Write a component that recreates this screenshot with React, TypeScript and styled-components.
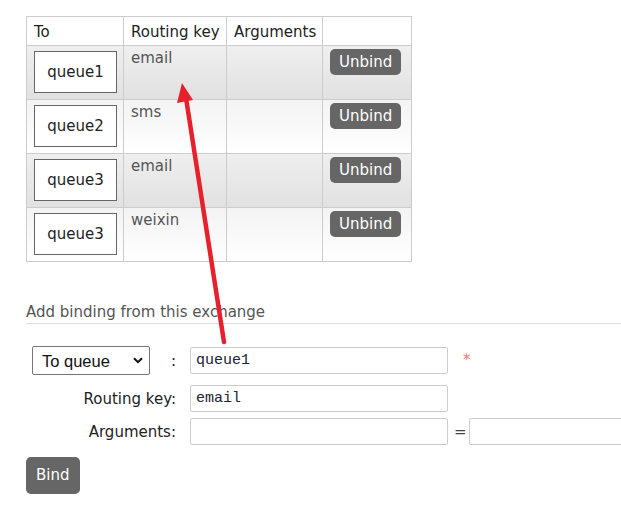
import React from "react";
import styled, { createGlobalStyle } from "styled-components";

const Global = createGlobalStyle`
  html, body { margin: 0; padding: 0; overflow: hidden; background: #fff; }
  body { font-family: "DejaVu Sans", Verdana, sans-serif; font-size: 15px; color: #222; }
`;

const Page = styled.div`
  position: relative;
  width: 621px;
  height: 506px;
  padding: 16px 0 0 26px;
  box-sizing: border-box;
`;

const Table = styled.table`
  border-collapse: collapse;
  border: 1px solid #ccc;
  table-layout: fixed;
  width: 386px;
`;

const Th = styled.th<{ $w: number }>`
  width: ${(p) => p.$w}px;
  border: 1px solid #ccc;
  padding: 6px 7px 4px 7px;
  text-align: left;
  font-weight: normal;
  color: #222;
  line-height: 18px;
  background: #fff;
  white-space: nowrap;
  overflow: visible;
`;

const Tr = styled.tr<{ $shaded: boolean }>`
  height: 54px;
  background: ${(p) =>
    p.$shaded
      ? "linear-gradient(#efefef, #e1e1e1)"
      : "linear-gradient(#f3f3f3, #ffffff)"};
`;

const Td = styled.td`
  border: 1px solid #ccc;
  padding: 3px 7px;
  vertical-align: top;
  color: #555;
  line-height: 18px;
`;

const QueueBox = styled.div`
  margin-top: 2px;
  width: 83px;
  height: 42px;
  box-sizing: border-box;
  border: 1px solid #666;
  background: #fff;
  color: #222;
  display: flex;
  align-items: center;
  justify-content: center;
`;

const Button = styled.button<{ $h: number }>`
  font-family: "DejaVu Sans", Verdana, sans-serif;
  font-size: 15px;
  background: #666;
  color: #fff;
  border: none;
  border-radius: 5px;
  height: ${(p) => p.$h}px;
  padding: 0 9px;
  cursor: pointer;
  line-height: 1;
`;

const UnbindButton = styled(Button)`
  margin-top: 0;
`;

const Heading = styled.h3`
  margin: 41px 0 0 0;
  padding: 0 0 2px 0;
  font-size: 15px;
  font-weight: normal;
  color: #555;
  line-height: 18px;
  border-bottom: 1px solid #ddd;
`;

const Form = styled.div`
  margin-top: 22px;
  display: flex;
  flex-direction: column;
`;

const FormRow = styled.div<{ $mb: number }>`
  display: grid;
  grid-template-columns: 156px 258px auto;
  column-gap: 8px;
  align-items: center;
  margin-bottom: ${(p) => p.$mb}px;
`;

const Label = styled.label`
  text-align: right;
  padding-right: 6px;
  color: #222;
  line-height: 18px;
  display: flex;
  justify-content: flex-end;
  align-items: center;
`;

const SelectLabel = styled(Label)`
  justify-content: space-between;
  padding-left: 6px;
`;

const SelectWrap = styled.div`
  position: relative;
  width: 118px;
  height: 29px;
`;

const Select = styled.select`
  appearance: none;
  -webkit-appearance: none;
  width: 118px;
  height: 29px;
  box-sizing: border-box;
  border: 1px solid #767676;
  border-radius: 2px;
  background: #fff;
  font-family: "Liberation Sans", Arial, sans-serif;
  font-size: 16.5px;
  color: #111;
  padding: 0 0 0 9px;
`;

const Chevron = styled.svg`
  position: absolute;
  right: 7px;
  top: 11px;
  pointer-events: none;
`;

const TextInput = styled.input<{ $mono?: boolean }>`
  width: 258px;
  height: 27px;
  box-sizing: border-box;
  border: 1px solid #ccc;
  border-radius: 2px;
  padding: 0 5px;
  font-family: ${(p) =>
    p.$mono ? '"Liberation Mono", "Courier New", monospace' : '"DejaVu Sans", sans-serif'};
  font-size: 15px;
  color: #223;
  background: #fff;
`;

const Extra = styled.div`
  display: flex;
  align-items: center;
`;

const Required = styled.span`
  color: #f77;
  font-size: 15px;
  margin-left: 7px;
  margin-top: -2px;
`;

const Eq = styled.span`
  color: #444;
  margin: 0 2px 0 -2px;
`;

const BindButton = styled(Button)`
  align-self: flex-start;
  padding: 0 10px;
`;

const Arrow = styled.svg`
  position: absolute;
  left: 0;
  top: 0;
  pointer-events: none;
`;

const rows = [
  { q: "queue1", key: "email" },
  { q: "queue2", key: "sms" },
  { q: "queue3", key: "email" },
  { q: "queue3", key: "weixin" },
];

export default function App() {
  return (
    <Page>
      <Global />
      <Table>
        <colgroup>
          <col style={{ width: 97 }} />
          <col style={{ width: 103 }} />
          <col style={{ width: 96 }} />
          <col style={{ width: 89 }} />
        </colgroup>
        <thead>
          <tr>
            <Th $w={97}>To</Th>
            <Th $w={103}>Routing key</Th>
            <Th $w={96}>Arguments</Th>
            <Th $w={89}></Th>
          </tr>
        </thead>
        <tbody>
          {rows.map((r, i) => (
            <Tr key={i} $shaded={i % 2 === 0}>
              <Td>
                <QueueBox>{r.q}</QueueBox>
              </Td>
              <Td>{r.key}</Td>
              <Td></Td>
              <Td>
                <UnbindButton $h={26}>Unbind</UnbindButton>
              </Td>
            </Tr>
          ))}
        </tbody>
      </Table>

      <Heading>Add binding from this exchange</Heading>

      <Form>
        <FormRow $mb={10}>
          <SelectLabel>
            <SelectWrap>
              <Select defaultValue="queue">
                <option value="queue">To queue</option>
                <option value="exchange">To exchange</option>
              </Select>
              <Chevron width="10" height="7" viewBox="0 0 10 7">
                <path d="M1 1.2 L5 5.2 L9 1.2" fill="none" stroke="#111" strokeWidth="2" />
              </Chevron>
            </SelectWrap>
            <span>:</span>
          </SelectLabel>
          <TextInput $mono defaultValue="queue1" />
          <Extra>
            <Required>*</Required>
          </Extra>
        </FormRow>
        <FormRow $mb={6}>
          <Label>Routing key:</Label>
          <TextInput $mono defaultValue="email" />
          <Extra />
        </FormRow>
        <FormRow $mb={12}>
          <Label>Arguments:</Label>
          <TextInput />
          <Extra>
            <Eq>=</Eq>
            <TextInput />
          </Extra>
        </FormRow>
        <BindButton $h={37}>Bind</BindButton>
      </Form>

      <Arrow width="621" height="506" viewBox="0 0 621 506">
        <line x1="224" y1="342" x2="186" y2="98" stroke="#e8202b" strokeWidth="4.5" strokeLinecap="round" />
        <polygon points="182,83 193,100 177,103" fill="#e8202b" />
      </Arrow>
    </Page>
  );
}
